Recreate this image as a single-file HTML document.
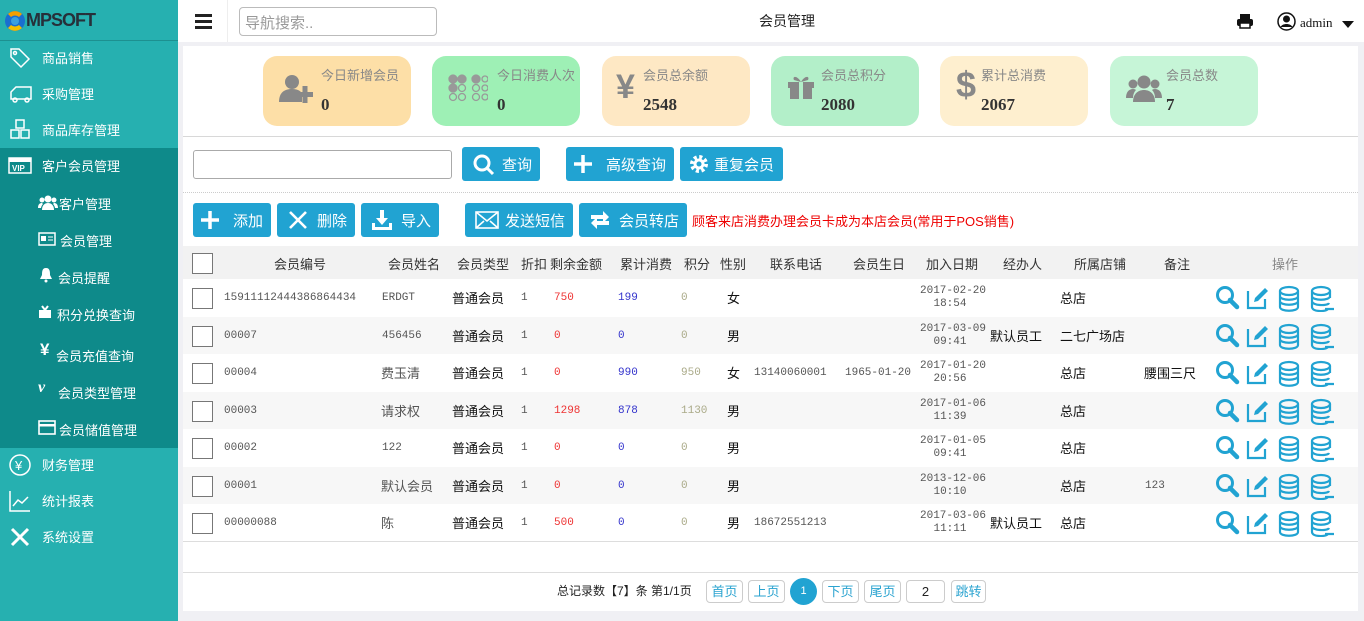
<!DOCTYPE html>
<html><head><meta charset="utf-8"><style>
*{margin:0;padding:0;box-sizing:border-box}
body{width:1364px;height:621px;overflow:hidden;background:#f0f0f4;font-family:"Liberation Sans","Noto Sans CJK SC",sans-serif;font-size:13px;color:#222;position:relative}
.a{position:absolute}
#side{left:0;top:0;width:178px;height:621px;background:#26b0b0}
.logo{left:0;top:0;width:178px;height:41px;border-bottom:1px solid #1d9090}
.mi{left:0;width:178px;height:36px;color:#fff;font-size:13px}
.mi span{position:absolute;left:42px;top:8px}
.mi svg{position:absolute;left:8px;top:6px}
#sub{left:0;top:148px;width:178px;height:300px;background:#0e8a8a}
.si{color:#fff;font-size:13px}
#top{left:178px;top:0;width:1186px;height:42px;background:#fff}
.btn{position:absolute;height:34px;background:#21a3d2;border-radius:3px;color:#fff;font-size:15px}
.btn svg{position:absolute}
.btn span{position:absolute;top:7px}
.card{position:absolute;top:56px;width:148px;height:70px;border-radius:14px}
.card .t{position:absolute;left:58px;top:9px;font-size:13px;color:#888}
.card .n{position:absolute;left:58px;top:39px;font-size:17px;font-weight:bold;color:#333;font-family:"Liberation Serif",serif}
.card svg{position:absolute;left:16px;top:18px}
.row{position:absolute;left:183px;width:1175px;height:37.5px;font-family:"Liberation Mono","Noto Sans CJK SC",monospace;font-size:11px;color:#555}
.row .c{position:absolute;top:13px;white-space:nowrap}
.row .z{font-family:"Liberation Sans","Noto Sans CJK SC",sans-serif;font-size:13px;color:#111;top:9px}
.row .d{position:absolute;left:737px;top:6px;width:60px;text-align:center;line-height:13px}
.cb{position:absolute;left:9px;top:9px;width:21px;height:21px;border:1px solid #777;background:#fff}
.hd{position:absolute;top:8px;font-size:13px;color:#333}
.pg{position:absolute;top:580px;height:23px;border:1px solid #ccc;border-radius:4px;color:#2aa3d0;font-size:13px;text-align:center;line-height:21px;background:#fff}
</style></head><body>
<div id="side" class="a">
 <div class="a logo"><svg class="a" style="left:4px;top:8px" width="22" height="26" viewBox="0 0 22 26"><circle cx="11" cy="13" r="10" fill="#1a6fd0"/><path d="M4 6a10 10 0 0 1 14 0l-3 3a6 6 0 0 0-8 0z" fill="#f5a000"/><path d="M4 20a10 10 0 0 0 14 0l-3-3a6 6 0 0 1-8 0z" fill="#f5c000"/><circle cx="11" cy="13" r="4" fill="#3aa0e0"/></svg>
 <span class="a" style="left:26px;top:10px;color:#26303a;font-size:18px;font-weight:bold;letter-spacing:-1px;font-family:'Liberation Sans',sans-serif">MPSOFT</span></div>
 <div class="a mi" style="top:40px"><svg width="24" height="24" viewBox="0 0 24 24" fill="none" stroke="#fff" stroke-width="1.5"><path d="M3 3h8l10 10-8 8L3 11z"/><circle cx="7" cy="7" r="1.5"/></svg><span>商品销售</span></div>
 <div class="a mi" style="top:76px"><svg width="26" height="24" viewBox="0 0 26 24" fill="none" stroke="#fff" stroke-width="1.5"><path d="M8 5h15v12H3v-7l5-5z"/><circle cx="7" cy="18" r="2"/><circle cx="19" cy="18" r="2"/></svg><span>采购管理</span></div>
 <div class="a mi" style="top:112px"><svg width="24" height="24" viewBox="0 0 24 24" fill="none" stroke="#fff" stroke-width="1.5"><rect x="8" y="2" width="8" height="8"/><rect x="3" y="12" width="8" height="8"/><rect x="13" y="12" width="8" height="8"/></svg><span>商品库存管理</span></div>
 <div id="sub" class="a"></div>
 <div class="a mi" style="top:148px"><svg width="24" height="24" viewBox="0 0 24 24"><rect x="1" y="4" width="22" height="15" fill="none" stroke="#fff" stroke-width="1.5"/><rect x="1" y="4" width="22" height="4" fill="#fff"/><text x="4" y="17" font-size="8" fill="#fff" font-family="Liberation Sans" font-weight="bold">VIP</text></svg><span>客户会员管理</span></div>
 <svg class="a" style="left:38px;top:195px" width="20" height="15" viewBox="0 0 20 15" fill="#fff"><circle cx="10" cy="4" r="3.5"/><circle cx="4" cy="5" r="2.5"/><circle cx="16" cy="5" r="2.5"/><path d="M4 15c0-5 3-7 6-7s6 2 6 7z"/><path d="M0 13c0-4 2-5 4-5l1 1c-1 1-2 3-2 4z"/><path d="M20 13c0-4-2-5-4-5l-1 1c1 1 2 3 2 4z"/></svg><span class="a si" style="left:59px;top:194px">客户管理</span>
 <svg class="a" style="left:38px;top:232px" width="18" height="14" viewBox="0 0 18 14"><rect x="1" y="1" width="16" height="12" fill="none" stroke="#fff" stroke-width="1.5"/><rect x="3" y="4" width="5" height="5" fill="#fff"/><path d="M10 5h5M10 8h5" stroke="#fff"/></svg><span class="a si" style="left:60px;top:231px">会员管理</span>
 <svg class="a" style="left:39px;top:267px" width="14" height="16" viewBox="0 0 14 16"><path d="M7 1C3 1 3 5 3 8L1 12h12l-2-4c0-3 0-7-4-7z" fill="#fff"/><circle cx="7" cy="14" r="1.5" fill="#fff"/></svg><span class="a si" style="left:58px;top:268px">会员提醒</span>
 <svg class="a" style="left:38px;top:305px" width="14" height="14" viewBox="0 0 14 14"><rect x="1" y="5" width="12" height="8" fill="#fff"/><path d="M4 1l3 4 3-4" stroke="#fff" stroke-width="2" fill="none"/></svg><span class="a si" style="left:57px;top:305px">积分兑换查询</span>
 <span class="a" style="left:40px;top:340px;color:#fff;font-size:17px;font-weight:bold">¥</span><span class="a si" style="left:56px;top:346px">会员充值查询</span>
 <span class="a" style="left:38px;top:379px;color:#fff;font-size:16px;font-weight:bold;font-style:italic;font-family:'Liberation Serif',serif">v</span><span class="a si" style="left:58px;top:383px">会员类型管理</span>
 <svg class="a" style="left:38px;top:420px" width="18" height="15" viewBox="0 0 18 15"><rect x="1" y="1" width="16" height="13" fill="none" stroke="#fff" stroke-width="1.6"/><rect x="1" y="4" width="16" height="2.5" fill="#fff"/></svg><span class="a si" style="left:59px;top:420px">会员储值管理</span>
 <div class="a mi" style="top:447px"><svg width="24" height="24" viewBox="0 0 24 24"><circle cx="12" cy="12" r="10" fill="none" stroke="#fff" stroke-width="1.5"/><text x="7" y="17" fill="#fff" font-size="13">¥</text></svg><span>财务管理</span></div>
 <div class="a mi" style="top:483px"><svg width="24" height="24" viewBox="0 0 24 24" fill="none" stroke="#fff" stroke-width="1.5"><path d="M2 2v20h20M5 17l5-6 4 3 6-6"/></svg><span>统计报表</span></div>
 <div class="a mi" style="top:519px"><svg width="24" height="24" viewBox="0 0 24 24" fill="none" stroke="#fff" stroke-width="3"><path d="M4 20L20 4M4 4l16 16"/></svg><span>系统设置</span></div>
</div>
<div id="top" class="a">
 <div class="a" style="left:0;top:0;width:50px;height:42px;border-right:1px solid #eee"></div>
 <div class="a" style="left:17px;top:14px;width:17px;height:3px;background:#222;box-shadow:0 6px 0 #222,0 12px 0 #222"></div>
 <div class="a" style="left:61px;top:7px;width:198px;height:29px;border:1px solid #bbb;border-radius:4px;color:#999;font-size:15px;padding:4px 5px">导航搜索..</div>
 <span class="a" style="left:581px;top:11px;font-size:14px;color:#222">会员管理</span>
 <svg class="a" style="left:1058px;top:13px" width="18" height="16" viewBox="0 0 18 16"><rect x="4" y="1" width="10" height="5" fill="#111"/><rect x="1" y="6" width="16" height="7" rx="2" fill="#111"/><rect x="4" y="10" width="10" height="5" fill="#fff" stroke="#111" stroke-width="1.5"/></svg>
 <svg class="a" style="left:1099px;top:12px" width="19" height="19" viewBox="0 0 19 19"><circle cx="9.5" cy="9.5" r="8.5" fill="none" stroke="#111" stroke-width="1.5"/><circle cx="9.5" cy="7" r="3.5" fill="#111"/><path d="M3.5 15c2-4 10-4 12 0" fill="#111"/></svg>
 <span class="a" style="left:1122px;top:15px;font-family:'Liberation Serif',serif;font-size:13px;color:#111">admin</span>
 <div class="a" style="left:1164px;top:21px;border-left:6px solid transparent;border-right:6px solid transparent;border-top:7px solid #111"></div>
</div>
<div class="a" style="left:183px;top:46px;width:1175px;height:565px;background:#fff"></div>
<div class="card" style="left:263px;background:#fddfa7"><svg width="36" height="30" viewBox="0 0 36 30" fill="#888"><circle cx="13" cy="8" r="7"/><path d="M0 28c0-10 6-13 13-13s10 3 10 6v7z"/><rect x="18" y="18" width="16" height="5"/><rect x="23.5" y="12" width="5" height="17"/></svg><div class="t">今日新增会员</div><div class="n">0</div></div>
<div class="card" style="left:432px;background:#9ef0b5"><svg width="40" height="30" viewBox="0 0 40 30" fill="none" stroke="#999" stroke-width="1.3"><g fill="#999"><circle cx="5" cy="5" r="4"/><circle cx="14" cy="5" r="4"/><circle cx="5" cy="14" r="4"/><circle cx="28" cy="5" r="4"/></g><circle cx="14" cy="14" r="3.5"/><circle cx="5" cy="23" r="3.5"/><circle cx="14" cy="23" r="3.5"/><circle cx="37" cy="5" r="3"/><circle cx="28" cy="14" r="3.5"/><circle cx="37" cy="14" r="3"/><circle cx="28" cy="23" r="3.5"/><circle cx="37" cy="23" r="3"/></svg><div class="t" style="left:65px">今日消费人次</div><div class="n" style="left:65px">0</div></div>
<div class="card" style="left:602px;background:#fee8c4"><span class="a" style="left:14px;top:12px;font-size:34px;font-weight:bold;color:#888">¥</span><div class="t" style="left:41px">会员总余额</div><div class="n" style="left:41px">2548</div></div>
<div class="card" style="left:771px;background:#b3efc9"><svg width="28" height="26" viewBox="0 0 28 26" fill="#888"><rect x="1" y="8" width="26" height="6"/><rect x="3" y="14" width="22" height="11"/><rect x="12" y="8" width="4" height="17" fill="#b3efc9"/><path d="M14 8C10 1 5 2 7 6zM14 8c4-7 9-6 7-2z"/></svg><div class="t" style="left:50px">会员总积分</div><div class="n" style="left:50px">2080</div></div>
<div class="card" style="left:940px;background:#feefcf"><span class="a" style="left:16px;top:8px;font-size:36px;font-weight:bold;color:#888">$</span><div class="t" style="left:41px">累计总消费</div><div class="n" style="left:41px">2067</div></div>
<div class="card" style="left:1110px;background:#c6f5d7"><svg width="36" height="30" viewBox="0 0 36 30" fill="#888"><circle cx="18" cy="8" r="6.5"/><circle cx="7" cy="10" r="4.5"/><circle cx="29" cy="10" r="4.5"/><path d="M7 28c0-8 5-12 11-12s11 4 11 12z"/><path d="M0 24c0-6 3-9 7-9 2 0 3 1 3 1-2 2-3 5-3 8z"/><path d="M36 24c0-6-3-9-7-9-2 0-3 1-3 1 2 2 3 5 3 8z"/></svg><div class="t" style="left:56px">会员总数</div><div class="n" style="left:56px">7</div></div>
<div class="a" style="left:183px;top:136px;width:1175px;height:1px;background:#d8d8d8"></div>
<div class="a" style="left:193px;top:150px;width:259px;height:29px;border:1px solid #aaa;border-radius:3px"></div>
<div class="btn" style="left:462px;top:147px;width:78px"><svg style="left:10px;top:6px" width="24" height="24" viewBox="0 0 24 24" fill="none" stroke="#fff" stroke-width="3"><circle cx="10" cy="10" r="7"/><path d="M15 15l6 6"/></svg><span style="left:40px">查询</span></div>
<div class="btn" style="left:566px;top:147px;width:108px"><svg style="left:7px;top:7px" width="20" height="20" viewBox="0 0 20 20" stroke="#fff" stroke-width="3.5"><path d="M10 1v18M1 10h18"/></svg><span style="left:40px">高级查询</span></div>
<div class="btn" style="left:680px;top:147px;width:103px"><svg style="left:9px;top:7px" width="20" height="20" viewBox="0 0 20 20"><circle cx="10" cy="10" r="7" fill="none" stroke="#fff" stroke-width="4" stroke-dasharray="3 2.5"/><circle cx="10" cy="10" r="5.5" fill="#fff"/><circle cx="10" cy="10" r="2.5" fill="#21a3d2"/></svg><span style="left:34px">重复会员</span></div>
<div class="a" style="left:183px;top:192px;width:1175px;border-top:1px dotted #ccc"></div>
<div class="btn" style="left:193px;top:203px;width:78px"><svg style="left:7px;top:7px" width="20" height="20" viewBox="0 0 20 20" stroke="#fff" stroke-width="3.5"><path d="M10 1v18M1 10h18"/></svg><span style="left:40px">添加</span></div>
<div class="btn" style="left:277px;top:203px;width:78px"><svg style="left:11px;top:7px" width="20" height="20" viewBox="0 0 20 20" stroke="#fff" stroke-width="2.6"><path d="M2 2l16 16M18 2L2 18"/></svg><span style="left:40px">删除</span></div>
<div class="btn" style="left:361px;top:203px;width:78px"><svg style="left:10px;top:6px" width="22" height="22" viewBox="0 0 22 22" fill="#fff"><rect x="9" y="1" width="4" height="9"/><path d="M5 9h12l-6 7z"/><path d="M1 14h3v4h14v-4h3v7H1z"/></svg><span style="left:40px">导入</span></div>
<div class="btn" style="left:465px;top:203px;width:108px"><svg style="left:10px;top:8px" width="24" height="18" viewBox="0 0 24 18" fill="none" stroke="#fff" stroke-width="1.6"><rect x="1" y="1" width="22" height="16"/><path d="M1 1l11 9 11-9M1 17l8-7M23 17l-8-7"/></svg><span style="left:40px">发送短信</span></div>
<div class="btn" style="left:579px;top:203px;width:108px"><svg style="left:10px;top:7px" width="22" height="20" viewBox="0 0 22 20" fill="#fff"><path d="M4 5h12V1l6 6-6 6V9H4z" transform="translate(-2,0)"/><path d="M18 15H6v4l-6-6 6-6v4h12z" transform="translate(2,0)"/></svg><span style="left:40px">会员转店</span></div>
<span class="a" style="left:692px;top:211px;color:#e00;font-size:13px">顾客来店消费办理会员卡成为本店会员(常用于POS销售)</span>
<div class="a" style="left:183px;top:246px;width:1175px;height:33px;background:#f2f2f2">
 <div class="cb" style="top:7px"></div>
 <span class="hd" style="left:91px">会员编号</span><span class="hd" style="left:205px">会员姓名</span><span class="hd" style="left:274px">会员类型</span><span class="hd" style="left:338px">折扣</span><span class="hd" style="left:367px">剩余金额</span><span class="hd" style="left:437px">累计消费</span><span class="hd" style="left:501px">积分</span><span class="hd" style="left:537px">性别</span><span class="hd" style="left:587px">联系电话</span><span class="hd" style="left:670px">会员生日</span><span class="hd" style="left:743px">加入日期</span><span class="hd" style="left:820px">经办人</span><span class="hd" style="left:891px">所属店铺</span><span class="hd" style="left:981px">备注</span><span class="hd" style="left:1089px;color:#888">操作</span>
</div>
<svg width="0" height="0" style="position:absolute"><defs>
<g id="ops"><circle cx="10" cy="10" r="7.5" fill="none" stroke="#21a3d2" stroke-width="3"/><path d="M15 15l7 7" stroke="#21a3d2" stroke-width="4.5" stroke-linecap="round"/>
<g transform="translate(32,2)"><path d="M1 4v17h17v-9" fill="none" stroke="#21a3d2" stroke-width="2.2"/><path d="M7 15l1-4 10-10 3 3-10 10z" fill="#21a3d2"/></g>
<g transform="translate(64,1)" fill="none" stroke="#21a3d2" stroke-width="2.2"><ellipse cx="10" cy="5" rx="9" ry="4"/><path d="M1 5v16c0 5 18 5 18 0V5M1 10c0 5 18 5 18 0M1 15c0 5 18 5 18 0"/></g>
<g transform="translate(96,1)" fill="none" stroke="#21a3d2" stroke-width="2.2"><ellipse cx="10" cy="5" rx="9" ry="4"/><path d="M1 5v16c0 5 14 5 16 2M19 5v7M1 10c0 5 18 5 18 0M1 15c0 5 16 5 17 2M14 23h9"/></g>
</g></defs></svg>
<div class="row" style="top:279px;background:#fff"><div class="cb"></div><span class="c" style="left:41px">15911112444386864434</span><span class="c" style="left:199px">ERDGT</span><span class="c z" style="left:269px">普通会员</span><span class="c" style="left:338px">1</span><span class="c" style="left:371px;color:#e33">750</span><span class="c" style="left:435px;color:#33c">199</span><span class="c" style="left:498px;color:#aa8">0</span><span class="c z" style="left:544px">女</span><div class="c d">2017-02-20<br>18:54</div><span class="c z" style="left:877px">总店</span><svg class="a" style="left:1032px;top:6px" width="125" height="27"><use href="#ops"/></svg></div>
<div class="row" style="top:316.5px;background:#f7f7f7"><div class="cb"></div><span class="c" style="left:41px">00007</span><span class="c" style="left:199px">456456</span><span class="c z" style="left:269px">普通会员</span><span class="c" style="left:338px">1</span><span class="c" style="left:371px;color:#e33">0</span><span class="c" style="left:435px;color:#33c">0</span><span class="c" style="left:498px;color:#aa8">0</span><span class="c z" style="left:544px">男</span><div class="c d">2017-03-09<br>09:41</div><span class="c z" style="left:807px">默认员工</span><span class="c z" style="left:877px">二七广场店</span><svg class="a" style="left:1032px;top:6px" width="125" height="27"><use href="#ops"/></svg></div>
<div class="row" style="top:354px;background:#fff"><div class="cb"></div><span class="c" style="left:41px">00004</span><span class="c z" style="left:198px;color:#555">费玉清</span><span class="c z" style="left:269px">普通会员</span><span class="c" style="left:338px">1</span><span class="c" style="left:371px;color:#e33">0</span><span class="c" style="left:435px;color:#33c">990</span><span class="c" style="left:498px;color:#aa8">950</span><span class="c z" style="left:544px">女</span><span class="c" style="left:571px">13140060001</span><span class="c" style="left:662px">1965-01-20</span><div class="c d">2017-01-20<br>20:56</div><span class="c z" style="left:877px">总店</span><span class="c z" style="left:961px">腰围三尺</span><svg class="a" style="left:1032px;top:6px" width="125" height="27"><use href="#ops"/></svg></div>
<div class="row" style="top:391.5px;background:#f7f7f7"><div class="cb"></div><span class="c" style="left:41px">00003</span><span class="c z" style="left:198px;color:#555">请求权</span><span class="c z" style="left:269px">普通会员</span><span class="c" style="left:338px">1</span><span class="c" style="left:371px;color:#e33">1298</span><span class="c" style="left:435px;color:#33c">878</span><span class="c" style="left:498px;color:#aa8">1130</span><span class="c z" style="left:544px">男</span><div class="c d">2017-01-06<br>11:39</div><span class="c z" style="left:877px">总店</span><svg class="a" style="left:1032px;top:6px" width="125" height="27"><use href="#ops"/></svg></div>
<div class="row" style="top:429px;background:#fff"><div class="cb"></div><span class="c" style="left:41px">00002</span><span class="c" style="left:199px">122</span><span class="c z" style="left:269px">普通会员</span><span class="c" style="left:338px">1</span><span class="c" style="left:371px;color:#e33">0</span><span class="c" style="left:435px;color:#33c">0</span><span class="c" style="left:498px;color:#aa8">0</span><span class="c z" style="left:544px">男</span><div class="c d">2017-01-05<br>09:41</div><span class="c z" style="left:877px">总店</span><svg class="a" style="left:1032px;top:6px" width="125" height="27"><use href="#ops"/></svg></div>
<div class="row" style="top:466.5px;background:#f7f7f7"><div class="cb"></div><span class="c" style="left:41px">00001</span><span class="c z" style="left:198px;color:#555">默认会员</span><span class="c z" style="left:269px">普通会员</span><span class="c" style="left:338px">1</span><span class="c" style="left:371px;color:#e33">0</span><span class="c" style="left:435px;color:#33c">0</span><span class="c" style="left:498px;color:#aa8">0</span><span class="c z" style="left:544px">男</span><div class="c d">2013-12-06<br>10:10</div><span class="c z" style="left:877px">总店</span><span class="c" style="left:962px">123</span><svg class="a" style="left:1032px;top:6px" width="125" height="27"><use href="#ops"/></svg></div>
<div class="row" style="top:504px;background:#fff"><div class="cb"></div><span class="c" style="left:41px">00000088</span><span class="c z" style="left:198px;color:#555">陈</span><span class="c z" style="left:269px">普通会员</span><span class="c" style="left:338px">1</span><span class="c" style="left:371px;color:#e33">500</span><span class="c" style="left:435px;color:#33c">0</span><span class="c" style="left:498px;color:#aa8">0</span><span class="c z" style="left:544px">男</span><span class="c" style="left:571px">18672551213</span><div class="c d">2017-03-06<br>11:11</div><span class="c z" style="left:807px">默认员工</span><span class="c z" style="left:877px">总店</span><svg class="a" style="left:1032px;top:6px" width="125" height="27"><use href="#ops"/></svg></div>
<div class="a" style="left:183px;top:541px;width:1175px;height:1px;background:#ddd"></div>
<div class="a" style="left:183px;top:572px;width:1175px;height:1px;background:#ddd"></div>
<span class="a" style="left:557px;top:582px;font-size:12px;color:#222">总记录数【7】条 第1/1页</span>
<div class="pg" style="left:706px;width:37px">首页</div>
<div class="pg" style="left:748px;width:37px">上页</div>
<div class="a" style="left:790px;top:578px;width:27px;height:27px;border-radius:50%;background:#21a3d2;color:#fff;font-size:11px;text-align:center;line-height:27px">1</div>
<div class="pg" style="left:822px;width:37px">下页</div>
<div class="pg" style="left:864px;width:37px">尾页</div>
<div class="pg" style="left:906px;width:39px;color:#222">2</div>
<div class="pg" style="left:951px;width:35px">跳转</div>
</body></html>
